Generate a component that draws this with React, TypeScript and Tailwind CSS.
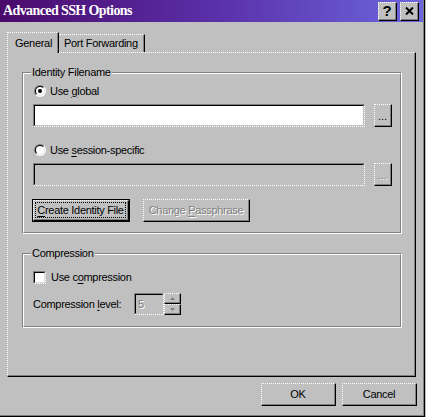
import React from "react";

function Raised({
  className = "",
  children,
}: {
  className?: string;
  children?: React.ReactNode;
}) {
  return (
    <div
      className={
        "flex bg-[#c0c0c0] border border-t-white border-l-white border-r-black border-b-black [border-top-style:dotted] [border-left-style:dotted] " +
        className
      }
    >
      <div className="flex flex-1 items-center justify-center border-r border-b border-[#808080]">
        {children}
      </div>
    </div>
  );
}

function Sunken({
  className = "",
  disabled = false,
  children,
}: {
  className?: string;
  disabled?: boolean;
  children?: React.ReactNode;
}) {
  return (
    <div
      className={
        "bg-[#c0c0c0] border border-t-[#808080] border-l-[#808080] border-r-white border-b-white [border-right-style:dotted] [border-bottom-style:dotted] " +
        className
      }
    >
      <div
        className={
          "h-full flex items-center border border-t-black border-l-black border-r-[#c0c0c0] border-b-[#c0c0c0] " +
          (disabled ? "bg-[#c0c0c0]" : "bg-white")
        }
      >
        {children}
      </div>
    </div>
  );
}

function Dis({ children }: { children: React.ReactNode }) {
  return (
    <span className="text-[#808080] [text-shadow:1px_1px_0_#ffffff]">
      {children}
    </span>
  );
}

function Radio({ checked }: { checked?: boolean }) {
  return (
    <svg width="12" height="12" viewBox="0 0 12 12" className="shrink-0">
      <defs>
        <clipPath id="rtl">
          <polygon points="0,0 12,0 0,12" />
        </clipPath>
        <clipPath id="rbr">
          <polygon points="12,0 12,12 0,12" />
        </clipPath>
      </defs>
      <circle cx="6" cy="6" r="6" fill="#808080" clipPath="url(#rtl)" />
      <circle cx="6" cy="6" r="6" fill="#ffffff" clipPath="url(#rbr)" />
      <circle cx="6" cy="6" r="5" fill="#000000" clipPath="url(#rtl)" />
      <circle cx="6" cy="6" r="5" fill="#dfdfdf" clipPath="url(#rbr)" />
      <circle cx="6" cy="6" r="4" fill="#ffffff" />
      {checked && <circle cx="6" cy="6" r="2" fill="#000000" />}
    </svg>
  );
}

function Group({
  label,
  className = "",
  children,
}: {
  label: string;
  className?: string;
  children: React.ReactNode;
}) {
  return (
    <div
      className={
        "relative border border-t-[#808080] border-l-[#808080] border-r-white border-b-white " +
        className
      }
    >
      <div className="h-full border border-t-white border-l-white border-r-[#808080] border-b-[#808080]">
        {children}
      </div>
      <span className="absolute left-[8px] top-[-7px] bg-[#c0c0c0] px-px leading-[13px]">
        {label}
      </span>
    </div>
  );
}

export default function App() {
  return (
    <div className="w-[426px] h-[417px] bg-[#c0c0c0] font-['Liberation_Sans',Arial,sans-serif] text-[11px] leading-[13px] tracking-[-0.3px] text-black overflow-hidden">
      <div className="h-full mr-px border-r border-b border-black">
        <div className="h-full flex flex-col border-r border-b border-[#808080]">
          {/* Title bar */}
          <div className="h-[22px] flex items-center bg-[linear-gradient(to_right,#4a0a6a,#5a2fa8_50%,#6c66de)] pl-[3px] pr-[4px]">
            <span className="font-['Liberation_Serif','Times_New_Roman',serif] font-bold text-[14px] tracking-[-0.6px] text-white leading-[16px]">
              Advanced SSH Options
            </span>
            <div className="ml-auto flex gap-[3px]">
              <Raised className="w-[19px] h-[19px]">
                <span className="font-bold text-[15px] leading-[15px] tracking-normal">?</span>
              </Raised>
              <Raised className="w-[19px] h-[19px]">
                <svg width="9" height="8" viewBox="0 0 9 8">
                  <path
                    d="M1 0.5 L8 7.5 M8 0.5 L1 7.5"
                    stroke="#000"
                    strokeWidth="2"
                    fill="none"
                  />
                </svg>
              </Raised>
            </div>
          </div>

          {/* Body */}
          <div className="flex flex-col pl-[7px] pt-[10px]">
            {/* Tabs */}
            <div className="flex items-end h-[20px] relative z-10">
              <div className="h-[21px] w-[52px] -mb-px bg-[#c0c0c0] border-l border-t border-r border-l-white border-t-white border-r-black [border-top-style:dotted] [border-left-style:dotted] flex">
                <div className="flex-1 flex items-center pl-[7px] border-r border-[#808080]">
                  General
                </div>
              </div>
              <div className="h-[18px] w-[86px] bg-[#c0c0c0] border-t border-r border-t-white border-r-black [border-top-style:dotted] flex">
                <div className="flex-1 flex items-center pl-[5px] border-r border-[#808080]">
                  Port Forwarding
                </div>
              </div>
            </div>

            {/* Panel */}
            <div className="w-[409px] h-[325px] border border-l-white border-t-white border-r-black border-b-black [border-top-style:dotted] [border-left-style:dotted]">
              <div className="h-full border-r border-b border-[#808080] pl-[14px] pr-[12px] pt-[19px] flex flex-col">
                <Group label="Identity Filename">
                  <div className="flex flex-col pl-[9px] pr-[8px] pt-[9px] pb-[10px]">
                    <div className="h-[16px] flex items-center pl-px gap-[4px]">
                      <Radio checked />
                      <span>
                        Use <span className="underline underline-offset-[2px]">g</span>lobal
                      </span>
                    </div>
                    <div className="mt-[5px] flex gap-[9px]">
                      <Sunken className="w-[332px] h-[23px]" />
                      <Raised className="w-[18px] h-[23px]">
                        <span className="pt-[3px] tracking-normal">...</span>
                      </Raised>
                    </div>
                    <div className="mt-[15px] h-[16px] flex items-center pl-px gap-[4px]">
                      <Radio />
                      <span>
                        Use <span className="underline underline-offset-[2px]">s</span>ession-specific
                      </span>
                    </div>
                    <div className="mt-[5px] flex gap-[9px]">
                      <Sunken className="w-[332px] h-[23px]" disabled />
                      <Raised className="w-[18px] h-[23px]">
                        <span className="pt-[3px] tracking-normal">
                          <Dis>...</Dis>
                        </span>
                      </Raised>
                    </div>
                    <div className="mt-[13px] flex gap-[13px] -ml-px">
                      <div className="w-[98px] h-[23px] border border-black flex">
                        <Raised className="flex-1">
                          <span className="border border-dotted border-black px-px leading-[14px]">
                            <span className="underline underline-offset-[2px]">C</span>reate Identity File
                          </span>
                        </Raised>
                      </div>
                      <Raised className="w-[107px] h-[23px]">
                        <Dis>
                          Change <span className="underline underline-offset-[2px]">P</span>assphrase
                        </Dis>
                      </Raised>
                    </div>
                  </div>
                </Group>

                <Group label="Compression" className="mt-[19px]">
                  <div className="flex flex-col pl-[9px] pt-[14px] pb-[11px]">
                    <div className="h-[16px] flex items-center gap-[5px]">
                      <div className="w-[13px] h-[13px] border border-t-[#808080] border-l-[#808080] border-r-white border-b-white [border-right-style:dotted] [border-bottom-style:dotted] bg-[#c0c0c0]">
                        <div className="h-full border border-t-black border-l-black border-r-[#dfdfdf] border-b-[#dfdfdf] bg-white" />
                      </div>
                      <span>
                        Use c<span className="underline underline-offset-[2px]">o</span>mpression
                      </span>
                    </div>
                    <div className="mt-[8px] h-[22px] flex items-center">
                      <span className="w-[101px]">
                        Compression <span className="underline underline-offset-[2px]">l</span>evel:
                      </span>
                      <Sunken className="w-[30px] h-[22px]" disabled>
                        <span className="pl-[2px]">
                          <Dis>5</Dis>
                        </span>
                      </Sunken>
                      <div className="flex flex-col w-[17px] h-[22px]">
                        <Raised className="h-[11px]">
                          <svg width="5" height="3" viewBox="0 0 5 3">
                            <path d="M2.5 0 L5 3 L0 3 Z" fill="#808080" />
                          </svg>
                        </Raised>
                        <Raised className="h-[11px]">
                          <svg width="5" height="3" viewBox="0 0 5 3">
                            <path d="M0 0 L5 0 L2.5 3 Z" fill="#808080" />
                          </svg>
                        </Raised>
                      </div>
                    </div>
                  </div>
                </Group>
              </div>
            </div>

            {/* Dialog buttons */}
            <div className="mt-[6px] flex justify-end gap-[6px] pr-[6px]">
              <Raised className="w-[75px] h-[23px]">OK</Raised>
              <Raised className="w-[75px] h-[23px]">Cancel</Raised>
            </div>
          </div>
        </div>
      </div>
    </div>
  );
}
